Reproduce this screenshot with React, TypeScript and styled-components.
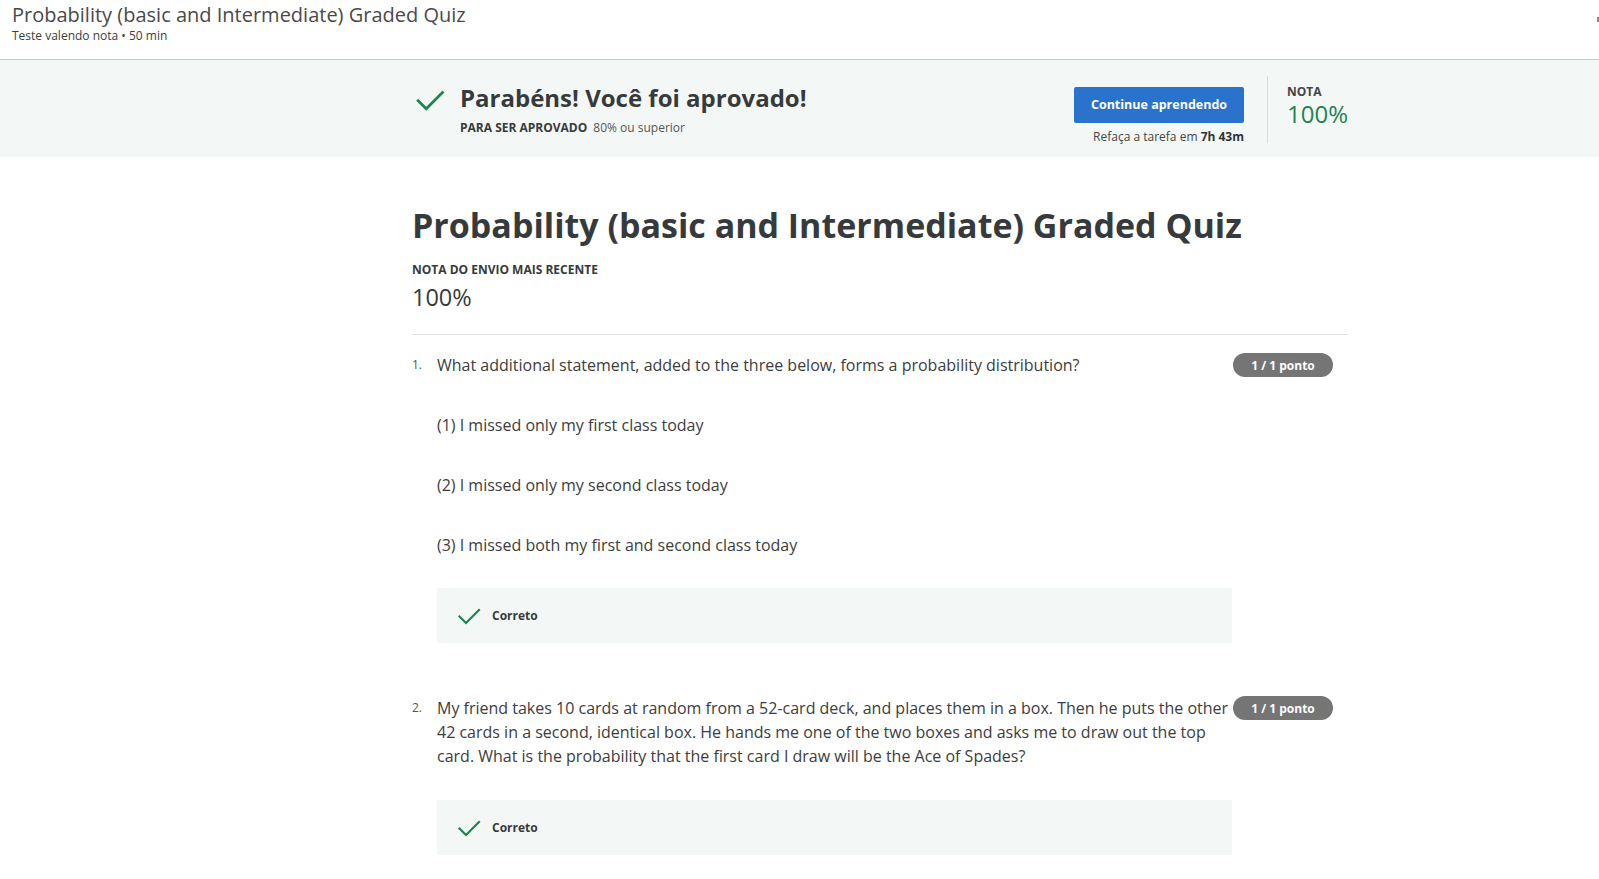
import styled, { createGlobalStyle } from 'styled-components';

const GlobalStyle = createGlobalStyle`
  html, body {
    margin: 0;
    padding: 0;
    background: #fff;
    font-family: "Open Sans", "Liberation Sans", sans-serif;
    color: #373a3c;
  }
`;

const Page = styled.div`
  width: 1599px;
  min-height: 879px;
  overflow: hidden;
  position: relative;
`;

const Header = styled.header`
  height: 60px;
  border-bottom: 1px solid #c7c7c7;
  padding: 2px 12px 0;
  box-sizing: border-box;
`;

const HeaderTitle = styled.div`
  font-size: 20px;
  line-height: 26px;
  color: #4a4a4a;
`;

const HeaderSub = styled.div`
  font-size: 12px;
  line-height: 16px;
  color: #3d3d3d;
`;

const Banner = styled.section`
  background: #f3f8f6;
  height: 97px;
  display: flex;
`;

const BannerInner = styled.div`
  width: 937px;
  margin-left: 412px;
  display: flex;
  align-items: center;
  padding-left: 3px;
  box-sizing: border-box;
`;

const BannerCheck = styled.div`
  width: 34px;
  display: flex;
  margin-top: -17px;
  margin-right: 11px;
`;

const BannerText = styled.div`
  flex: 1;
`;

const BannerTitle = styled.div`
  font-size: 24px;
  font-weight: 700;
  line-height: 32px;
  color: #373a3c;
`;

const PassLine = styled.div`
  font-size: 12px;
  line-height: 16px;
  margin-top: 6px;
  color: #555;

  strong {
    font-weight: 700;
    color: #373a3c;
    margin-right: 6px;
  }
`;

const ActionCol = styled.div`
  display: flex;
  flex-direction: column;
  align-items: flex-end;
  margin-top: 14px;
`;

const PrimaryButton = styled.button`
  width: 170px;
  height: 36px;
  border: none;
  border-radius: 2px;
  background: #2a73cc;
  color: #fff;
  font-family: inherit;
  font-size: 12.5px;
  font-weight: 700;
  cursor: pointer;
`;

const Retry = styled.div`
  font-size: 12px;
  line-height: 16px;
  margin-top: 6px;
  color: #444;

  b {
    font-weight: 700;
    color: #333;
  }
`;

const GradeBox = styled.div`
  margin-left: 23px;
  border-left: 1px solid #dcdcdc;
  height: 67px;
  padding-left: 19px;
  width: 62px;
  margin-top: 2px;
`;

const GradeLabel = styled.div`
  font-size: 12px;
  font-weight: 700;
  line-height: 16px;
  margin-top: 8px;
  color: #444;
`;

const GradeValue = styled.div`
  font-size: 24px;
  line-height: 28px;
  color: #1f8354;
`;

const Content = styled.main`
  width: 936px;
  margin-left: 412px;
  padding-top: 44px;
`;

const QuizTitle = styled.h1`
  margin: 0;
  font-size: 34px;
  font-weight: 700;
  line-height: 48px;
  color: #373a3c;
`;

const Label = styled.div`
  font-size: 12px;
  font-weight: 700;
  line-height: 16px;
  margin-top: 13px;
  color: #373a3c;
`;

const Score = styled.div`
  font-size: 23.5px;
  line-height: 30px;
  margin-top: 4px;
  color: #373a3c;
`;

const Rule = styled.hr`
  border: none;
  border-top: 1px solid #e2e2e2;
  margin: 22px 0 0;
`;

const QuestionBlock = styled.div<{ $first?: boolean }>`
  padding-top: ${(p) => (p.$first ? '18px' : '53px')};
`;

const QuestionRow = styled.div`
  display: flex;
  align-items: flex-start;
`;

const QNumber = styled.div`
  width: 25px;
  font-size: 12px;
  line-height: 24px;
  color: #555;
`;

const QText = styled.div`
  width: 796px;
  font-size: 16px;
  line-height: 24px;
  color: #3d3d3d;
`;

const Badge = styled.span`
  height: 24px;
  width: 100px;
  border-radius: 12px;
  background: #757575;
  color: #fff;
  font-size: 12px;
  font-weight: 700;
  display: flex;
  align-items: center;
  justify-content: center;
`;

const Option = styled.div`
  margin-left: 25px;
  margin-top: 36px;
  font-size: 16px;
  line-height: 24px;
  color: #3d3d3d;
`;

const Feedback = styled.div<{ $gap: number }>`
  margin-left: 25px;
  margin-top: ${(p) => p.$gap}px;
  width: 795px;
  height: 55px;
  background: #f3f8f6;
  display: flex;
  align-items: center;
  padding-left: 20px;
  box-sizing: border-box;
  font-size: 12px;
  font-weight: 700;
  color: #373a3c;
  gap: 11px;
`;

const EdgeMark = styled.div`
  position: absolute;
  top: 17px;
  right: 0;
  width: 2px;
  height: 5px;
  background: #888;
`;

const Check = ({ size, stroke }: { size: number; stroke: number }) => (
  <svg width={size} height={size} viewBox="0 0 24 24" fill="none">
    <path
      d="M2.5 12.5 L9 19 L22 6"
      stroke="#1f8354"
      strokeWidth={stroke}
      strokeLinecap="square"
    />
  </svg>
);

const App = () => (
  <Page>
    <GlobalStyle />
    <EdgeMark />
    <Header>
      <HeaderTitle>Probability (basic and Intermediate) Graded Quiz</HeaderTitle>
      <HeaderSub>Teste valendo nota • 50 min</HeaderSub>
    </Header>

    <Banner>
      <BannerInner>
        <BannerCheck>
          <Check size={30} stroke={2.2} />
        </BannerCheck>
        <BannerText>
          <BannerTitle>Parabéns! Você foi aprovado!</BannerTitle>
          <PassLine>
            <strong>PARA SER APROVADO</strong>80% ou superior
          </PassLine>
        </BannerText>
        <ActionCol>
          <PrimaryButton>Continue aprendendo</PrimaryButton>
          <Retry>
            Refaça a tarefa em <b>7h 43m</b>
          </Retry>
        </ActionCol>
        <GradeBox>
          <GradeLabel>NOTA</GradeLabel>
          <GradeValue>100%</GradeValue>
        </GradeBox>
      </BannerInner>
    </Banner>

    <Content>
      <QuizTitle>Probability (basic and Intermediate) Graded Quiz</QuizTitle>
      <Label>NOTA DO ENVIO MAIS RECENTE</Label>
      <Score>100%</Score>
      <Rule />

      <QuestionBlock $first>
        <QuestionRow>
          <QNumber>1.</QNumber>
          <QText>
            What additional statement, added to the three below, forms a probability distribution?
          </QText>
          <Badge>1 / 1 ponto</Badge>
        </QuestionRow>
        <Option>(1) I missed only my first class today</Option>
        <Option>(2) I missed only my second class today</Option>
        <Option>(3) I missed both my first and second class today</Option>
        <Feedback $gap={31}>
          <Check size={24} stroke={2.2} />
          Correto
        </Feedback>
      </QuestionBlock>

      <QuestionBlock>
        <QuestionRow>
          <QNumber>2.</QNumber>
          <QText>
            My friend takes 10 cards at random from a 52-card deck, and places them in a box. Then
            he puts the other 42 cards in a second, identical box. He hands me one of the two boxes
            and asks me to draw out the top card. What is the probability that the first card I draw
            will be the Ace of Spades?
          </QText>
          <Badge>1 / 1 ponto</Badge>
        </QuestionRow>
        <Feedback $gap={32}>
          <Check size={24} stroke={2.2} />
          Correto
        </Feedback>
      </QuestionBlock>
    </Content>
  </Page>
);

export default App;
